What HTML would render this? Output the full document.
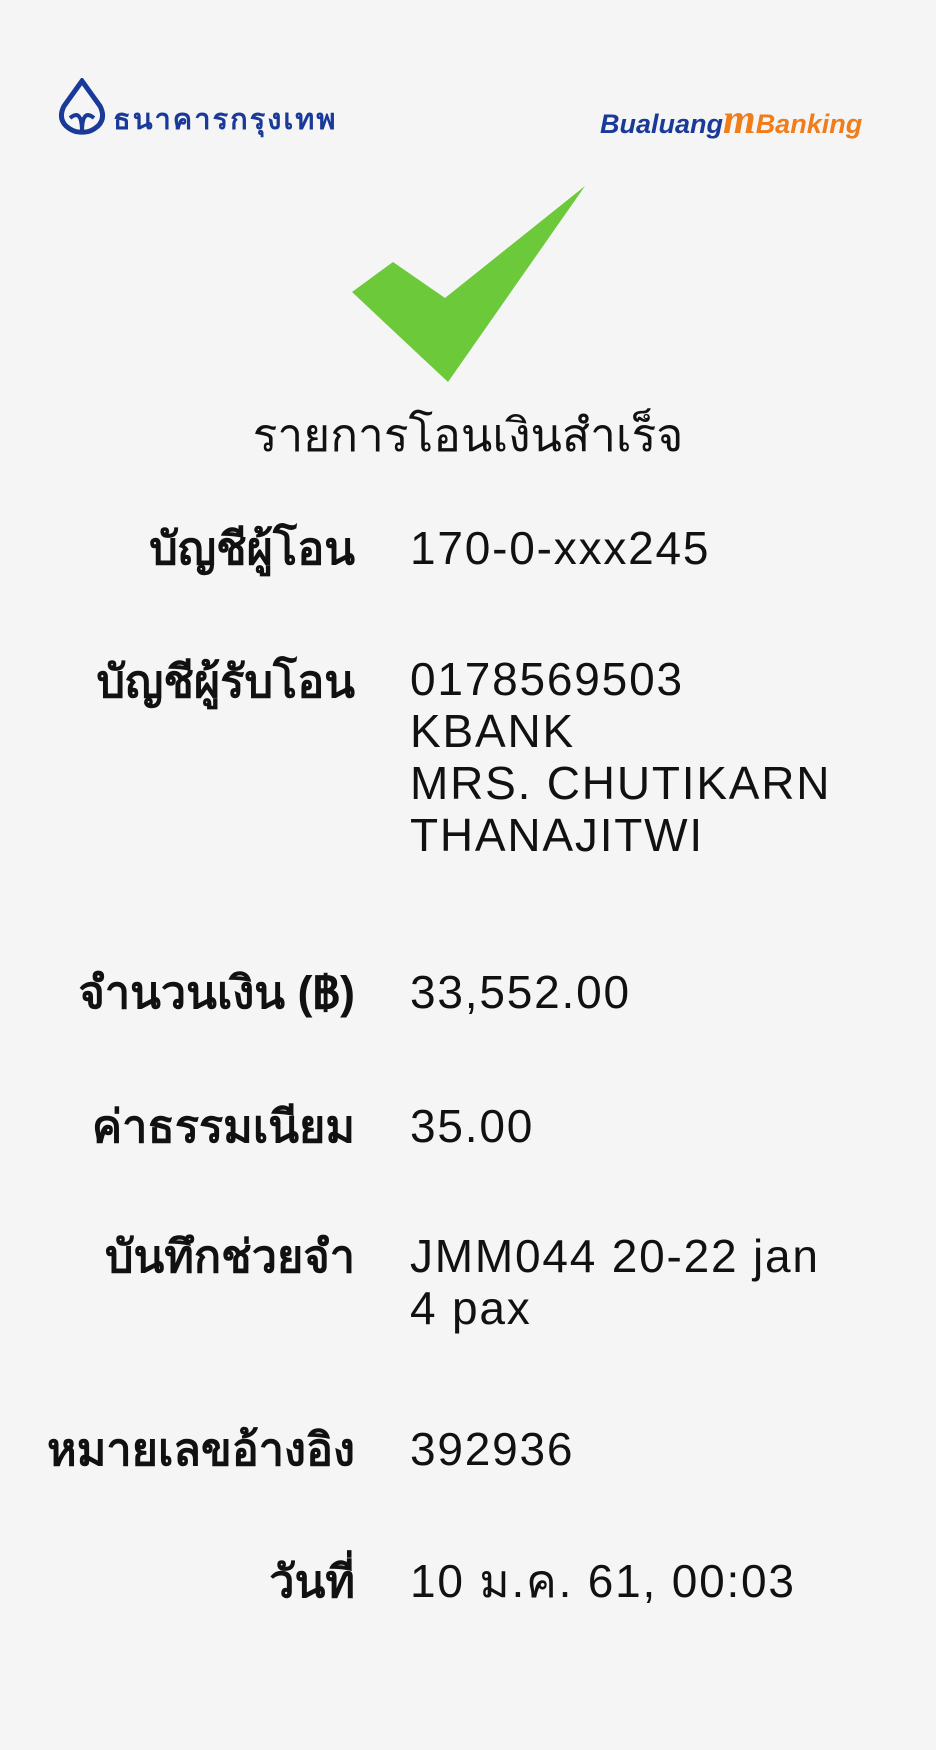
<!DOCTYPE html>
<html><head><meta charset="utf-8"><style>
html,body{margin:0;padding:0}
body{width:936px;height:1750px;background:#f5f5f5;position:relative;overflow:hidden;font-family:"Liberation Sans","Noto Sans CJK SC",sans-serif;color:#111}
.l{position:absolute;right:581px;font-size:45px;font-weight:bold;text-align:right;white-space:nowrap;line-height:48px}
.v{position:absolute;left:410px;font-size:46px;line-height:52px;white-space:nowrap;letter-spacing:1.8px}
</style></head><body>
<svg style="position:absolute;left:58px;top:78px" width="52" height="58" viewBox="0 0 52 58">
<path d="M24 3 L6 28 Q0 40 8 48 Q16 55 24 54 Q32 55 40 48 Q48 40 42 28 Z" fill="none" stroke="#1a3a9a" stroke-width="5"/>
<path d="M12 40 Q24 30 24 54 Q24 30 36 40" fill="none" stroke="#1a3a9a" stroke-width="4"/>
</svg>
<div style="position:absolute;left:113px;top:96px;font-size:29px;font-weight:bold;color:#1a3a9a;font-family:'Noto Sans CJK SC',sans-serif;letter-spacing:2px">ธนาคารกรุงเทพ</div>
<div style="position:absolute;left:600px;top:96px;font-size:27px;font-weight:bold;font-style:italic;white-space:nowrap"><span style="color:#1a3a9a">Bualuang</span><span style="color:#f07c1a;font-size:42px;font-family:'Liberation Serif',serif">m</span><span style="color:#f07c1a">Banking</span></div>
<svg style="position:absolute;left:0;top:0" width="936" height="420"><polygon points="352,292 393,262 445,298 585,186 448,382" fill="#6cc93a"/></svg>
<div style="position:absolute;left:0;width:936px;top:408px;text-align:center;font-size:46px;line-height:54px">รายการโอนเงินสำเร็จ</div>
<div class="l" style="top:525px">บัญชีผู้โอน</div><div class="v" style="top:522px">170-0-xxx245</div>
<div class="l" style="top:658px">บัญชีผู้รับโอน</div><div class="v" style="top:653px">0178569503<br>KBANK<br>MRS. CHUTIKARN<br>THANAJITWI</div>
<div class="l" style="top:969px">จำนวนเงิน (฿)</div><div class="v" style="top:966px">33,552.00</div>
<div class="l" style="top:1103px">ค่าธรรมเนียม</div><div class="v" style="top:1100px">35.00</div>
<div class="l" style="top:1233px">บันทึกช่วยจำ</div><div class="v" style="top:1230px">JMM044 20-22 jan<br>4 pax</div>
<div class="l" style="top:1426px">หมายเลขอ้างอิง</div><div class="v" style="top:1423px">392936</div>
<div class="l" style="top:1558px">วันที่</div><div class="v" style="top:1555px">10 ม.ค. 61, 00:03</div>
</body></html>
